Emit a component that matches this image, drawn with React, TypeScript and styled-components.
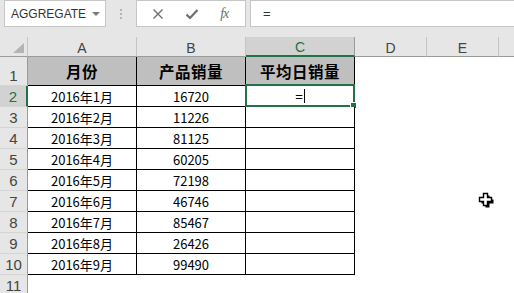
import styled, { createGlobalStyle, css } from 'styled-components';

const GlobalStyle = createGlobalStyle`
  html, body {
    margin: 0;
    padding: 0;
    background: #ffffff;
    overflow: hidden;
  }
  body {
    font-family: "Liberation Sans", Arial, sans-serif;
  }
`;

const GREEN = '#217346';

const Page = styled.div`
  position: relative;
  width: 514px;
  height: 293px;
  background: #ffffff;
  overflow: hidden;
`;

const FormulaBar = styled.div`
  display: flex;
  align-items: flex-start;
  height: 37px;
  background: #e6e6e6;
  padding-left: 4px;
  box-sizing: border-box;
`;

const NameBox = styled.div`
  display: flex;
  align-items: center;
  justify-content: space-between;
  width: 102px;
  height: 27px;
  box-sizing: border-box;
  background: #ffffff;
  border: 1px solid #c6c6c6;
  padding: 0 5px 0 6px;
  font-size: 12px;
  color: #333;
`;

const Arrow = styled.span`
  width: 0;
  height: 0;
  border-left: 4px solid transparent;
  border-right: 4px solid transparent;
  border-top: 4px solid #7a7a7a;
  margin-top: 1px;
`;

const Dots = styled.div`
  display: flex;
  flex-direction: column;
  gap: 2px;
  width: 30px;
  align-items: center;
  padding-top: 9px;

  span {
    width: 2px;
    height: 2px;
    background: #b4b4b4;
  }
`;

const ButtonBox = styled.div`
  display: flex;
  align-items: center;
  justify-content: space-around;
  width: 110px;
  height: 27px;
  box-sizing: border-box;
  background: #ffffff;
  border: 1px solid #c6c6c6;
  padding: 0 6px 0 4px;
`;

const Fx = styled.span`
  font-family: "Liberation Serif", "Times New Roman", serif;
  font-style: italic;
  font-size: 14px;
  color: #6d6d6d;
  letter-spacing: -1px;
`;

const FormulaInput = styled.div`
  flex: 1;
  margin-left: 4px;
  height: 27px;
  box-sizing: border-box;
  background: #ffffff;
  border: 1px solid #c6c6c6;
  border-right: none;
  display: flex;
  align-items: center;
  padding-left: 12px;
  font-size: 13px;
  color: #333;
`;

const Grid = styled.div`
  display: grid;
  grid-template-columns: 28px 109px 109px 109px 72px 72px 1fr;
  grid-template-rows: 20px 29px repeat(10, 21px);
`;

const Corner = styled.div`
  box-sizing: border-box;
  background: #e6e6e6;
  border-right: 1px solid #c4c4c4;
  border-bottom: 1px solid #9b9b9b;
  display: flex;
  align-items: flex-end;
  justify-content: flex-end;
  padding: 0 3px 3px 0;
`;

const CornerMark = styled.span`
  width: 0;
  height: 0;
  border-left: 11px solid transparent;
  border-bottom: 10px solid #b4b4b4;
`;

const ColHead = styled.div<{ $active?: boolean; $last?: boolean }>`
  box-sizing: border-box;
  background: #e6e6e6;
  border-right: ${p => (p.$last ? 'none' : '1px solid #c4c4c4')};
  border-bottom: 1px solid #9b9b9b;
  display: flex;
  align-items: center;
  justify-content: center;
  padding-top: 2px;
  font-size: 14px;
  color: #444;
  ${p =>
    p.$active &&
    css`
      background: #d2d2d2;
      color: ${GREEN};
      border-bottom: 2px solid ${GREEN};
      border-right-color: #9b9b9b;
    `}
`;

const RowHead = styled.div<{ $active?: boolean }>`
  box-sizing: border-box;
  background: #e6e6e6;
  border-right: 1px solid #9b9b9b;
  border-bottom: 1px solid #d4d4d4;
  display: flex;
  align-items: flex-end;
  justify-content: center;
  padding-bottom: 1px;
  font-size: 15px;
  line-height: 17px;
  color: #444;
  ${p =>
    p.$active &&
    css`
      background: #d2d2d2;
      color: ${GREEN};
      border-right: 2px solid ${GREEN};
    `}
`;

const Cell = styled.div<{ $head?: boolean }>`
  position: relative;
  box-sizing: border-box;
  border-right: 1px solid #000;
  border-bottom: 1px solid #000;
  display: flex;
  align-items: center;
  justify-content: center;
  font-family: "Noto Sans CJK SC", "Liberation Sans", sans-serif;
  font-size: 13px;
  color: #000;
  background: ${p => (p.$head ? '#bfbfbf' : '#ffffff')};
  ${p =>
    p.$head &&
    css`
      font-size: 15.5px;
      font-weight: 700;
      letter-spacing: 0.5px;
    `}
`;

const Blank = styled.div`
  background: #ffffff;
`;

const Selection = styled.div`
  position: absolute;
  left: -1px;
  top: -2px;
  right: -1px;
  bottom: -1px;
  border: 2px solid ${GREEN};
  pointer-events: none;

  &::after {
    content: '';
    position: absolute;
    right: -4px;
    bottom: -4px;
    width: 5px;
    height: 5px;
    background: ${GREEN};
    border: 1px solid #ffffff;
  }
`;

const Editing = styled.span`
  display: flex;
  align-items: center;
  font-family: "Liberation Sans", sans-serif;
  font-size: 13px;

  &::after {
    content: '';
    width: 1px;
    height: 14px;
    background: #000;
    margin-left: 1px;
  }
`;

const Cursor = styled.svg`
  position: absolute;
  left: 478px;
  top: 192px;
`;

const data: [string, string][] = [
  ['2016年1月', '16720'],
  ['2016年2月', '11226'],
  ['2016年3月', '81125'],
  ['2016年4月', '60205'],
  ['2016年5月', '72198'],
  ['2016年6月', '46746'],
  ['2016年7月', '85467'],
  ['2016年8月', '26426'],
  ['2016年9月', '99490'],
];

const columns = ['A', 'B', 'C', 'D', 'E', ''];

export default function App() {
  return (
    <Page>
      <GlobalStyle />
      <FormulaBar>
        <NameBox>
          AGGREGATE
          <Arrow />
        </NameBox>
        <Dots>
          <span />
          <span />
          <span />
        </Dots>
        <ButtonBox>
          <svg width="12" height="12" viewBox="0 0 12 12">
            <path d="M1.5 1.5 L10.5 10.5 M10.5 1.5 L1.5 10.5" stroke="#6d6d6d" strokeWidth="1.4" />
          </svg>
          <svg width="14" height="12" viewBox="0 0 14 12">
            <path d="M1.5 6.5 L5 10 L12.5 2" stroke="#6d6d6d" strokeWidth="2.2" fill="none" />
          </svg>
          <Fx>fx</Fx>
        </ButtonBox>
        <FormulaInput>=</FormulaInput>
      </FormulaBar>

      <Grid>
        <Corner>
          <CornerMark />
        </Corner>
        {columns.map((c, i) => (
          <ColHead key={i} $active={c === 'C'} $last={i === columns.length - 1}>
            {c}
          </ColHead>
        ))}

        <RowHead>1</RowHead>
        <Cell $head>月份</Cell>
        <Cell $head>产品销量</Cell>
        <Cell $head>平均日销量</Cell>
        <Blank />
        <Blank />
        <Blank />

        {data.map(([month, sales], i) => (
          <RowRender key={month} row={i + 2} month={month} sales={sales} />
        ))}

        <RowHead>11</RowHead>
        <Blank />
        <Blank />
        <Blank />
        <Blank />
        <Blank />
        <Blank />
      </Grid>

      <Cursor width="16" height="17" viewBox="0 0 16 17">
        <path
          d="M6 2 H10 V6 H14 V10 H10 V14 H6 V10 H2 V6 H6 Z"
          transform="translate(1.5 1.5)"
          fill="#000"
        />
        <path
          d="M5.5 1.5 H9.5 V5.5 H13.5 V9.5 H9.5 V13.5 H5.5 V9.5 H1.5 V5.5 H5.5 Z"
          fill="#fff"
          stroke="#000"
          strokeWidth="1.4"
        />
      </Cursor>
    </Page>
  );
}

function RowRender({ row, month, sales }: { row: number; month: string; sales: string }) {
  const active = row === 2;
  return (
    <>
      <RowHead $active={active}>{row}</RowHead>
      <Cell>{month}</Cell>
      <Cell>{sales}</Cell>
      <Cell>
        {active && (
          <>
            <Editing>=</Editing>
            <Selection />
          </>
        )}
      </Cell>
      <Blank />
      <Blank />
      <Blank />
    </>
  );
}
